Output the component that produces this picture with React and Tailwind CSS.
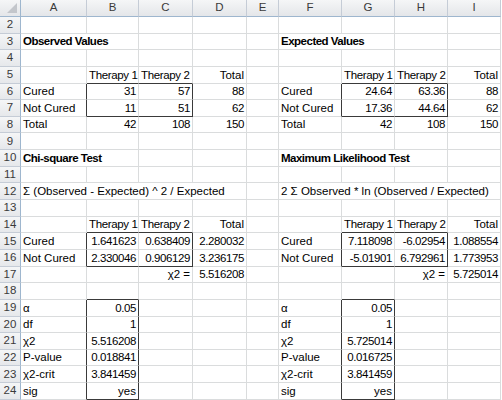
import React from 'react'

const COLS = ['A', 'B', 'C', 'D', 'E', 'F', 'G', 'H', 'I']

const TH = { left: true, tight: true }

// cell contents: [col, text, opts]
const SHEET = {
  3: [['A', 'Observed Values', { bold: true, span: 2 }], ['F', 'Expected Values', { bold: true, span: 2 }]],
  5: [['B', 'Therapy 1', TH], ['C', 'Therapy 2', TH], ['D', 'Total', { text: true }], ['G', 'Therapy 1', TH], ['H', 'Therapy 2', TH], ['I', 'Total', { text: true }]],
  6: [['A', 'Cured', { left: true }], ['B', '31'], ['C', '57'], ['D', '88'], ['F', 'Cured', { left: true }], ['G', '24.64'], ['H', '63.36'], ['I', '88']],
  7: [['A', 'Not Cured', { left: true }], ['B', '11'], ['C', '51'], ['D', '62'], ['F', 'Not Cured', { left: true }], ['G', '17.36'], ['H', '44.64'], ['I', '62']],
  8: [['A', 'Total', { left: true }], ['B', '42'], ['C', '108'], ['D', '150'], ['F', 'Total', { left: true }], ['G', '42'], ['H', '108'], ['I', '150']],
  10: [['A', 'Chi-square Test', { bold: true, span: 2 }], ['F', 'Maximum Likelihood Test', { bold: true, span: 3 }]],
  12: [['A', 'Σ (Observed - Expected) ^ 2 / Expected', { left: true, span: 4 }], ['F', '2 Σ Observed * ln (Observed / Expected)', { left: true, span: 4 }]],
  14: [['B', 'Therapy 1', TH], ['C', 'Therapy 2', TH], ['D', 'Total', { text: true }], ['G', 'Therapy 1', TH], ['H', 'Therapy 2', TH], ['I', 'Total', { text: true }]],
  15: [['A', 'Cured', { left: true }], ['B', '1.641623'], ['C', '0.638409'], ['D', '2.280032'], ['F', 'Cured', { left: true }], ['G', '7.118098'], ['H', '-6.02954'], ['I', '1.088554']],
  16: [['A', 'Not Cured', { left: true }], ['B', '2.330046'], ['C', '0.906129'], ['D', '3.236175'], ['F', 'Not Cured', { left: true }], ['G', '-5.01901'], ['H', '6.792961'], ['I', '1.773953']],
  17: [['C', 'χ2 =', { text: true }], ['D', '5.516208'], ['H', 'χ2 =', { text: true }], ['I', '5.725014']],
  19: [['A', 'α', { left: true }], ['B', '0.05'], ['F', 'α', { left: true }], ['G', '0.05']],
  20: [['A', 'df', { left: true }], ['B', '1'], ['F', 'df', { left: true }], ['G', '1']],
  21: [['A', 'χ2', { left: true }], ['B', '5.516208'], ['F', 'χ2', { left: true }], ['G', '5.725014']],
  22: [['A', 'P-value', { left: true }], ['B', '0.018841'], ['F', 'P-value', { left: true }], ['G', '0.016725']],
  23: [['A', 'χ2-crit', { left: true }], ['B', '3.841459'], ['F', 'χ2-crit', { left: true }], ['G', '3.841459']],
  24: [['A', 'sig', { left: true }], ['B', 'yes', { text: true }], ['F', 'sig', { left: true }], ['G', 'yes', { text: true }]],
}

const BOXES = [
  { r1: 6, r2: 7, c1: 1, c2: 2 },
  { r1: 6, r2: 7, c1: 6, c2: 7 },
  { r1: 15, r2: 16, c1: 1, c2: 2 },
  { r1: 15, r2: 16, c1: 6, c2: 7 },
  { r1: 19, r2: 24, c1: 1, c2: 1 },
  { r1: 19, r2: 24, c1: 6, c2: 6 },
]

const inBox = (r, c) => BOXES.find((b) => r >= b.r1 && r <= b.r2 && c >= b.c1 && c <= b.c2)

const darkRight = (r, c) => {
  const b = inBox(r, c)
  if (b && c === b.c2) return true
  const n = inBox(r, c + 1)
  return !!(n && c + 1 === n.c1)
}

const darkBottom = (r, c) => {
  const b = inBox(r, c)
  if (b && r === b.r2) return true
  const n = inBox(r + 1, c)
  return !!(n && r + 1 === n.r1)
}

const SPANS = { 1: '', 2: 'col-span-2', 3: 'col-span-3', 4: 'col-span-4' }

const Cell = ({ row, col, text, opts = {} }) => {
  const span = opts.span || 1
  const last = col + span - 1
  const isNumber = !opts.left && !opts.bold && !opts.text
  return (
    <div
      className={`${SPANS[span]} flex items-end overflow-visible whitespace-nowrap border-r border-b px-[2px] pb-[1px] leading-[14px] ${
        darkRight(row, last) ? 'border-r-[#3a3a3a]' : 'border-r-[#dadcdd]'
      } ${darkBottom(row, col) ? 'border-b-[#3a3a3a]' : 'border-b-[#dadcdd]'} ${
        opts.left || opts.bold ? 'justify-start' : 'justify-end'
      } ${opts.bold ? 'font-bold tracking-[-0.5px]' : ''} ${isNumber ? 'tracking-[-0.4px]' : ''} ${
        opts.tight ? 'tracking-[-0.35px]' : ''
      }`}
    >
      {text}
    </div>
  )
}

const Row = ({ row }) => {
  const entries = SHEET[row] || []
  const cells = []
  let c = 0
  while (c < COLS.length) {
    const e = entries.find((x) => x[0] === COLS[c])
    if (e) {
      cells.push(<Cell key={c} row={row} col={c} text={e[1]} opts={e[2]} />)
      c += (e[2] && e[2].span) || 1
    } else {
      cells.push(<Cell key={c} row={row} col={c} text="" />)
      c += 1
    }
  }
  return (
    <>
      <div className="flex items-center justify-center border-r border-b border-r-[#9eb6ce] border-b-[#c5ccd6] bg-gradient-to-b from-[#f5f6f7] to-[#e6e8eb] text-[#3a3a3a]">
        {row}
      </div>
      {cells}
    </>
  )
}

export default function App() {
  const rows = Array.from({ length: 23 }, (_, i) => i + 2)
  return (
    <div className="h-[400px] w-[502px] overflow-hidden bg-white">
      <div
        className="grid grid-cols-[21px_66px_52px_54px_54px_32px_63px_53px_53px_53px] grid-rows-[17px_repeat(23,16.65px)] text-[11.5px] text-black"
        style={{ fontFamily: '"Liberation Sans", Arial, sans-serif' }}
      >
        <div className="relative border-r border-b border-r-[#9eb6ce] border-b-[#9eb6ce] bg-gradient-to-b from-[#f5f6f7] to-[#e4e6e9]">
          <svg className="absolute right-[3px] bottom-[3px]" width="10" height="10" viewBox="0 0 10 10">
            <polygon points="10,0 10,10 0,10" fill="#c3c6cb" />
          </svg>
        </div>
        {COLS.map((c) => (
          <div
            key={c}
            className="flex items-center justify-center border-r border-b border-r-[#c5ccd6] border-b-[#9eb6ce] bg-gradient-to-b from-[#f5f6f7] to-[#e4e6e9] text-[#3a3a3a]"
          >
            {c}
          </div>
        ))}
        {rows.map((r) => (
          <Row key={r} row={r} />
        ))}
      </div>
    </div>
  )
}
